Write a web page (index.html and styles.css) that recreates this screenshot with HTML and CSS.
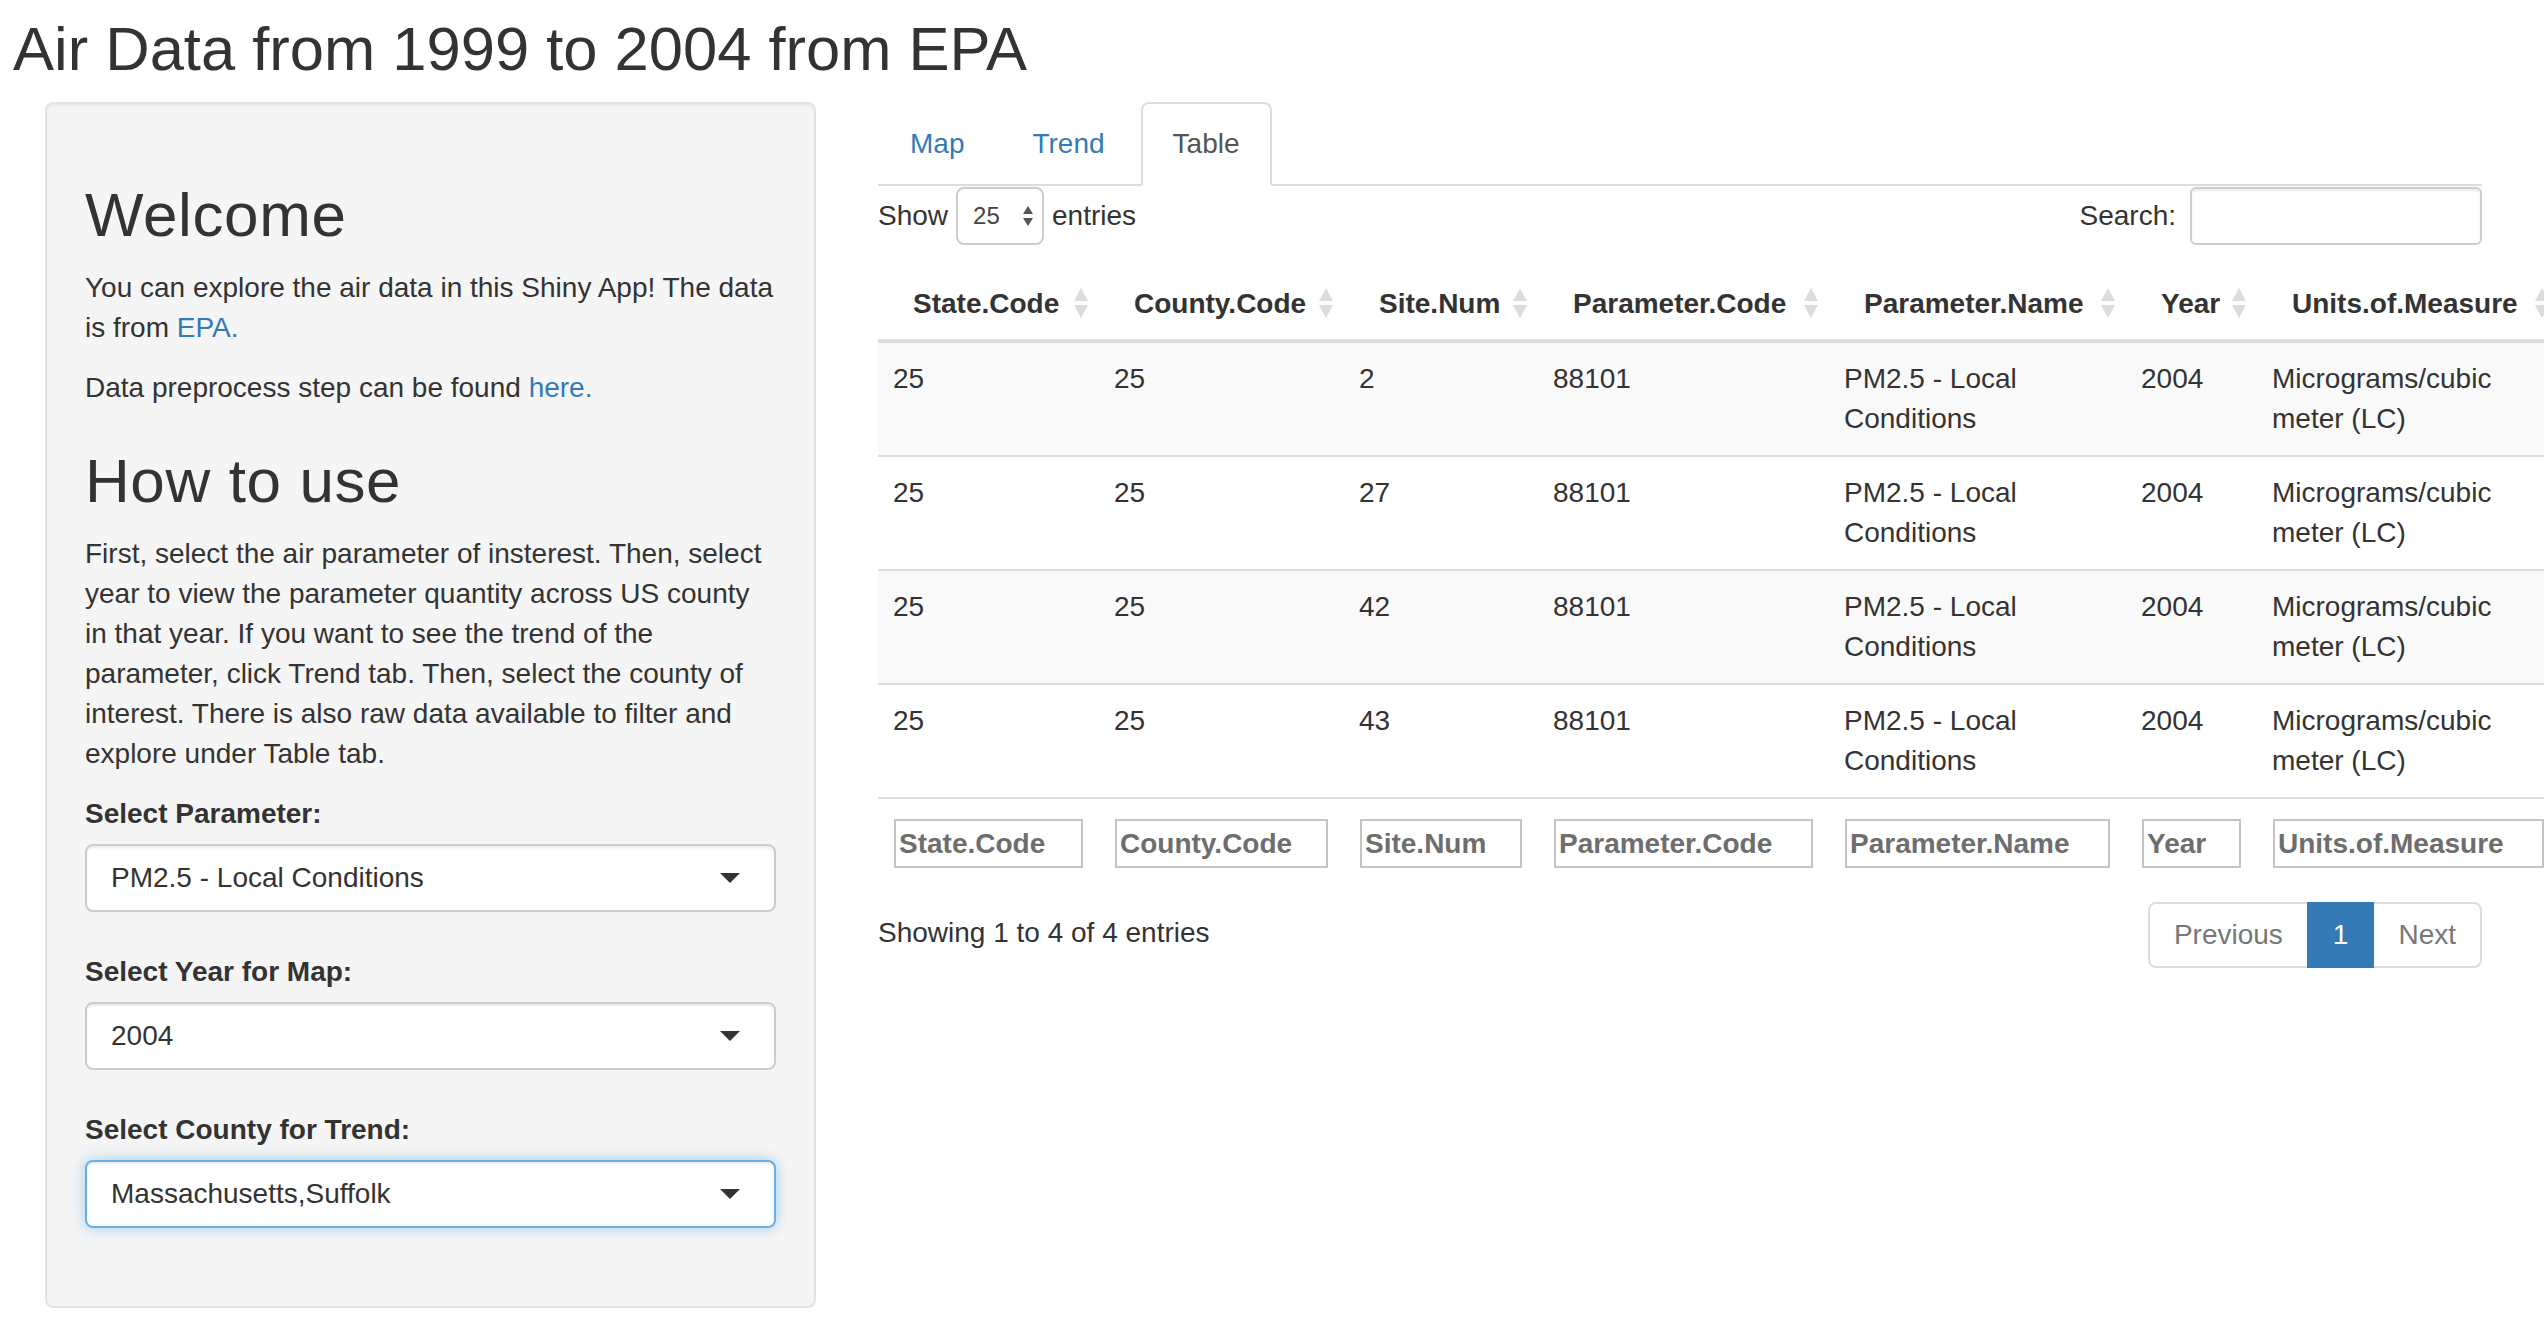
FILE: index.html
```html
<!DOCTYPE html>
<html lang="en">
<head>
<meta charset="utf-8">
<title>Air Data from 1999 to 2004 from EPA</title>
<link rel="stylesheet" href="styles.css">
</head>
<body>
<h2 class="title">Air Data from 1999 to 2004 from EPA</h2>
<div class="layout">
  <div class="sidebar">
    <div class="well">
      <h2>Welcome</h2>
      <p class="intro"><span>You can explore the air data in this Shiny App! The data </span><span>is from</span> <a href="#">EPA.</a></p>
      <p>Data preprocess step can be found <a href="#">here.</a></p>
      <h2>How to use</h2>
      <p>First, select the air parameter of insterest. Then, select year to view the parameter quantity across US county in that year. If you want to see the trend of the parameter, click Trend tab. Then, select the county of interest. There is also raw data available to filter and explore under Table tab.</p>
      <div class="form-group">
        <label class="ctl-label">Select Parameter:</label>
        <div class="sel"><span>PM2.5 - Local Conditions</span><span class="caret"></span></div>
      </div>
      <div class="form-group">
        <label class="ctl-label">Select Year for Map:</label>
        <div class="sel"><span>2004</span><span class="caret"></span></div>
      </div>
      <div class="form-group">
        <label class="ctl-label">Select County for Trend:</label>
        <div class="sel focus"><span>Massachusetts,Suffolk</span><span class="caret"></span></div>
      </div>
    </div>
  </div>
  <div class="main">
    <ul class="tabs">
      <li class="tab">Map</li>
      <li class="tab">Trend</li>
      <li class="tab active">Table</li>
    </ul>
    <div class="dt-top">
      <div class="len">Show
        <div class="len-sel"><span>25</span>
          <svg class="spin" width="12" height="22" viewBox="0 0 12 22"><polygon points="1,9 6,1 11,9" fill="#555"/><polygon points="1,13 6,21 11,13" fill="#555"/></svg>
        </div>
        entries</div>
      <div class="filter">Search:<div class="search"></div></div>
    </div>
    <table class="dt">
      <colgroup>
        <col class="c1"><col class="c2"><col class="c3"><col class="c4"><col class="c5"><col class="c6"><col class="c7">
      </colgroup>
      <thead>
        <tr>
          <th>State.Code<svg class="sort" width="18" height="32" viewBox="0 0 18 32"><polygon points="2,14 9,1 16,14" fill="#dcdcdc"/><polygon points="2,18 9,31 16,18" fill="#dcdcdc"/></svg></th>
          <th>County.Code<svg class="sort" width="18" height="32" viewBox="0 0 18 32"><polygon points="2,14 9,1 16,14" fill="#dcdcdc"/><polygon points="2,18 9,31 16,18" fill="#dcdcdc"/></svg></th>
          <th>Site.Num<svg class="sort" width="18" height="32" viewBox="0 0 18 32"><polygon points="2,14 9,1 16,14" fill="#dcdcdc"/><polygon points="2,18 9,31 16,18" fill="#dcdcdc"/></svg></th>
          <th>Parameter.Code<svg class="sort" width="18" height="32" viewBox="0 0 18 32"><polygon points="2,14 9,1 16,14" fill="#dcdcdc"/><polygon points="2,18 9,31 16,18" fill="#dcdcdc"/></svg></th>
          <th>Parameter.Name<svg class="sort" width="18" height="32" viewBox="0 0 18 32"><polygon points="2,14 9,1 16,14" fill="#dcdcdc"/><polygon points="2,18 9,31 16,18" fill="#dcdcdc"/></svg></th>
          <th>Year<svg class="sort" width="18" height="32" viewBox="0 0 18 32"><polygon points="2,14 9,1 16,14" fill="#dcdcdc"/><polygon points="2,18 9,31 16,18" fill="#dcdcdc"/></svg></th>
          <th>Units.of.Measure<svg class="sort" width="18" height="32" viewBox="0 0 18 32"><polygon points="2,14 9,1 16,14" fill="#dcdcdc"/><polygon points="2,18 9,31 16,18" fill="#dcdcdc"/></svg></th>
        </tr>
      </thead>
      <tbody>
        <tr><td>25</td><td>25</td><td>2</td><td>88101</td><td>PM2.5 - Local Conditions</td><td>2004</td><td>Micrograms/cubic meter (LC)</td></tr>
        <tr><td>25</td><td>25</td><td>27</td><td>88101</td><td>PM2.5 - Local Conditions</td><td>2004</td><td>Micrograms/cubic meter (LC)</td></tr>
        <tr><td>25</td><td>25</td><td>42</td><td>88101</td><td>PM2.5 - Local Conditions</td><td>2004</td><td>Micrograms/cubic meter (LC)</td></tr>
        <tr><td>25</td><td>25</td><td>43</td><td>88101</td><td>PM2.5 - Local Conditions</td><td>2004</td><td>Micrograms/cubic meter (LC)</td></tr>
      </tbody>
      <tfoot>
        <tr>
          <th><input class="colf" type="text" placeholder="State.Code"></th>
          <th><input class="colf" type="text" placeholder="County.Code"></th>
          <th><input class="colf" type="text" placeholder="Site.Num"></th>
          <th><input class="colf" type="text" placeholder="Parameter.Code"></th>
          <th><input class="colf" type="text" placeholder="Parameter.Name"></th>
          <th><input class="colf" type="text" placeholder="Year"></th>
          <th><input class="colf" type="text" placeholder="Units.of.Measure"></th>
        </tr>
      </tfoot>
    </table>
    <div class="dt-bottom">
      <div class="info">Showing 1 to 4 of 4 entries</div>
      <ul class="pager">
        <li class="pg first">Previous</li>
        <li class="pg active">1</li>
        <li class="pg last">Next</li>
      </ul>
    </div>
  </div>
</div>
</body>
</html>
```

FILE: styles.css
```css
* { box-sizing: border-box; }
html, body { margin: 0; padding: 0; overflow: hidden; background: #fff; }
body {
  width: 2544px;
  height: 1328px;
  font-family: "Liberation Sans", Arial, Helvetica, sans-serif;
  font-size: 28px;
  line-height: 40px;
  color: #333;
}
a { color: #337ab7; text-decoration: none; }

.title {
  margin: 16px 0 20px 13px;
  font-size: 61.5px;
  line-height: 66px;
  font-weight: 500;
}

.layout {
  display: flex;
  align-items: flex-start;
  padding-left: 45px;
}

/* Sidebar */
.sidebar { width: 771px; flex: none; }
.well {
  background: #f5f5f5;
  border: 2px solid #e3e3e3;
  border-radius: 8px;
  box-shadow: inset 0 2px 2px rgba(0, 0, 0, 0.05);
  padding: 38px;
}
.well h2 {
  font-size: 62px;
  letter-spacing: 0.6px;
  line-height: 66px;
  font-weight: 500;
  margin: 40px 0 20px;
}
.well p { margin: 0 0 20px; }
.well .intro { margin-right: -8px; }

.form-group { margin-bottom: 40px; }
.ctl-label {
  display: inline-block;
  font-weight: bold;
  margin-bottom: 10px;
}
.sel {
  height: 68px;
  border: 2px solid #ccc;
  border-radius: 8px;
  background: #fff;
  padding: 12px 24px;
  box-shadow: inset 0 2px 2px rgba(0, 0, 0, 0.075);
  display: flex;
  align-items: center;
  justify-content: space-between;
  color: #333;
}
.sel.focus {
  border-color: #66afe9;
  box-shadow: inset 0 2px 2px rgba(0, 0, 0, 0.075), 0 0 14px rgba(102, 175, 233, 0.6);
}
.caret {
  width: 0;
  height: 0;
  border-style: solid;
  border-width: 10px 10px 0;
  border-color: #333 transparent transparent;
  margin-right: 10px;
}

/* Main panel */
.main { margin-left: 62px; width: 1604px; flex: none; }
.tabs {
  display: flex;
  list-style: none;
  margin: 0;
  padding: 0;
  border-bottom: 2px solid #ddd;
}
.tab {
  margin: 0 4px -2px 0;
  padding: 20px 30px;
  border: 2px solid transparent;
  border-radius: 8px 8px 0 0;
  color: #337ab7;
}
.tab.active {
  color: #555;
  background: #fff;
  border-color: #ddd #ddd transparent;
}

.dt-top {
  display: flex;
  justify-content: space-between;
  align-items: center;
  margin-top: 1px;
  height: 58px;
}
.len { display: flex; align-items: center; gap: 8px; white-space: nowrap; }
.len-sel {
  width: 88px;
  height: 58px;
  border: 2px solid #ccc;
  border-radius: 8px;
  display: flex;
  align-items: center;
  justify-content: space-between;
  padding: 0 8px 0 15px;
  font-size: 24px;
  color: #444;
}
.filter { display: flex; align-items: center; white-space: nowrap; }
.search {
  margin-left: 14px;
  width: 292px;
  height: 58px;
  border: 2px solid #ccc;
  border-radius: 6px;
  box-shadow: inset 0 2px 2px rgba(0, 0, 0, 0.075);
}

.dt {
  width: 1682px;
  table-layout: fixed;
  border-collapse: separate;
  border-spacing: 0;
  margin: 22px 0 15px;
}
.c1 { width: 221px; }
.c2 { width: 245px; }
.c3 { width: 194px; }
.c4 { width: 291px; }
.c5 { width: 297px; }
.c6 { width: 131px; }
.c7 { width: 303px; }

.dt thead th {
  position: relative;
  text-align: left;
  font-weight: bold;
  white-space: nowrap;
  padding: 17px 40px 15px 35px;
  border-bottom: 4px solid #ddd;
}
.sort {
  position: absolute;
  right: 9px;
  top: 50%;
  margin-top: -16px;
}
.dt td {
  padding: 16px 15px;
  vertical-align: top;
  border-top: 2px solid #ddd;
}
.dt tbody tr:first-child td { border-top: 0; }
.dt tbody tr:nth-child(odd) td { background: #f9f9f9; }
.dt tfoot th {
  padding: 20px 16px 12px;
  border-top: 2px solid #ddd;
}
.colf {
  display: block;
  width: 100%;
  height: 49px;
  margin: 0;
  padding: 0 3px;
  border: 2px solid #c4c4c4;
  background: #fff;
  font-family: "Liberation Sans", Arial, Helvetica, sans-serif;
  font-size: 28px;
  font-weight: bold;
  color: #333;
}
.colf::placeholder { color: #6e6e6e; opacity: 1; }

.dt-bottom {
  display: flex;
  justify-content: space-between;
  align-items: flex-start;
}
.info { padding-top: 18px; white-space: nowrap; }
.pager {
  display: flex;
  list-style: none;
  margin: 7px 0 0;
  padding: 0;
}
.pg {
  padding: 11px 24px;
  border: 2px solid #ddd;
  margin-left: -2px;
  background: #fff;
  color: #777;
}
.pg.first { margin-left: 0; border-radius: 8px 0 0 8px; }
.pg.last { border-radius: 0 8px 8px 0; }
.pg.active {
  background: #337ab7;
  border-color: #337ab7;
  color: #fff;
  position: relative;
}
```
